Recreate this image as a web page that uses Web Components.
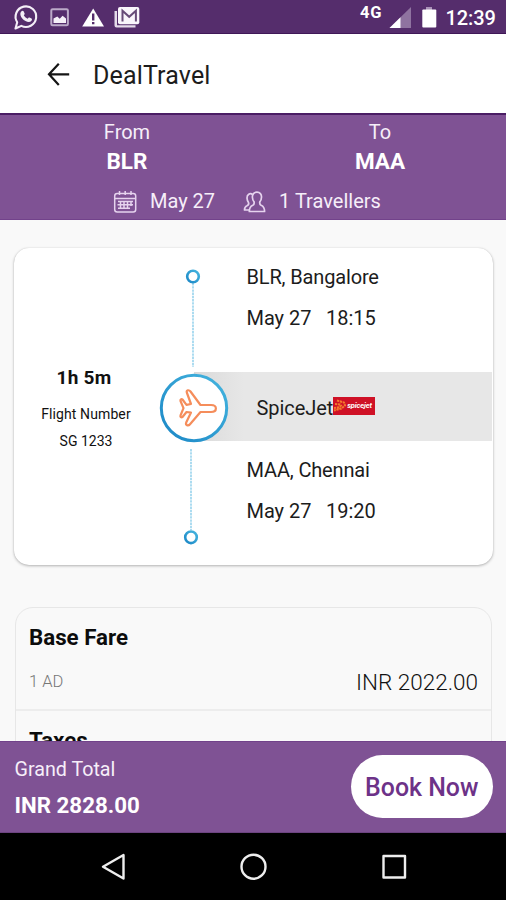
<!DOCTYPE html>
<html lang="en">
<head>
<meta charset="utf-8">
<title>DealTravel</title>
<style>
html,body{margin:0;height:100%;overflow:hidden;background:#f9f9f9}
body{font-family:Roboto,"Liberation Sans",sans-serif;color:#1c1c1c}
</style>
</head>
<body>
<deal-app></deal-app>
<script>
function define(name, html) {
  const t = document.createElement('template');
  t.innerHTML = html;
  customElements.define(name, class extends HTMLElement {
    constructor() {
      super();
      this.attachShadow({mode: 'open'}).appendChild(t.content.cloneNode(true));
    }
  });
}

define('status-bar', `
<style>
:host{display:flex;height:34px;background:#552d6c;color:#fff;box-sizing:border-box;box-shadow:inset 0 -1px #3f1757}
svg{display:block;flex:none}
.left{width:340px}
.net{font:700 16.500px/20px Roboto,sans-serif;padding:3px 0 0 20px;width:26px;letter-spacing:.8px}
.sig{width:50px;margin-left:1px}
.time{font:500 20px/36px Roboto,sans-serif;margin-left:8.500px;letter-spacing:-.1px}
</style>
<svg class="left" width="340" height="34" viewBox="0 0 340 34" fill="none">
  <path d="M15.5 28.5 17.2 22.2A10.3 10.3 0 1 1 21.3 25.9Z" stroke="#f4eef7" stroke-width="2.1" stroke-linejoin="round"/>
  <path d="M21.5 11.2c.7-.8 1.7-.7 2.1.1l1 2.1c.2.5 0 .9-.8 1.9.8 1.6 2 2.7 3.8 3.4 1-1.1 1.3-1.4 1.9-1.1l2 1c.7.4.6 1.4 0 2.1-1.4 1.6-3.6 1.6-6 .3-2.500-1.300-4.400-3.600-5-5.800-.4-1.600 0-3 1-4z" fill="#f4eef7"/>
  <rect x="51.300" y="9.300" width="16.600" height="16" rx="1.300" stroke="#bba9c8" stroke-width="2"/>
  <path d="M53.500 23v-4.500l3.800-2 2.400 2.200 2.900-3 3.400 2.800V23z" fill="#f5eff8"/>
  <path d="M93.200 8.400 104 26.500H82.200z" fill="#fff"/>
  <path d="M92 13.500h2.400v7H92zM92 22h2.400v2.300H92z" fill="#552d6c"/>
  <path d="M114.500 11h2.500v14.200h18.500v2.300h-19a2 2 0 0 1-2-2z" fill="#e5dbea"/>
  <rect x="118" y="7" width="21.300" height="17.300" rx="2" fill="#f9f5fb"/>
  <path d="M122.500 21.500V10.800l6.700 6 6.700-6V21.500" stroke="#674b78" stroke-width="2"/>
</svg>
<span class="net">4G</span>
<svg class="sig" width="50" height="34" viewBox="387 0 50 34">
  <path d="M389.500 28 411 7v21z" fill="#8f73a0"/><path d="M389.500 28 400.500 17.300V28z" fill="#fff"/>
  <path d="M426 7h6v3h-6z" fill="#a991b7"/><rect x="422.300" y="9.500" width="14" height="18" rx="1" fill="#fff"/>
</svg>
<span class="time">12:39</span>`);

define('app-bar', `
<style>
:host{display:flex;align-items:center;height:79px;background:#fff;box-sizing:border-box;padding-left:46px}
svg{display:block}
h1{font:400 25px/32px Roboto,sans-serif;letter-spacing:.15px;margin:4px 0 0 22px}
</style>
<svg width="25" height="26" viewBox="0 0 25 26" fill="none" stroke="#151515" stroke-width="2.200"><path d="M12.800 2.700 3 13.300 12.800 24M3 13.300h20.200"/></svg>
<h1><slot></slot></h1>`);

define('route-stop', `
<style>
:host{display:flex;flex-direction:column;align-items:center;width:120px;color:#fff}
.l{font-size:20px;line-height:28px;color:#f6eef9}
.c{font-size:22.500px;font-weight:700;line-height:30px}
</style>
<span class="l"><slot name="label"></slot></span><span class="c"><slot></slot></span>`);

define('search-summary', `
<style>
:host{display:block;height:107px;background:#7f5294;box-sizing:border-box;padding-top:5px;box-shadow:inset 0 2px 0 #4a1d64,inset 0 -1px #72428b;color:#f6eef9}
.stops{display:flex;justify-content:space-between;padding:0 66px 0 67px}
.meta{display:flex;align-items:center;padding:10px 0 0 112px;font-size:20px;line-height:31px}
.meta span{margin-left:12px;margin-right:27px}
.meta svg+span+svg+span{margin-left:11px}
svg{display:block}
</style>
<div class="stops"><route-stop><span slot="label">From</span>BLR</route-stop><route-stop><span slot="label">To</span>MAA</route-stop></div>
<div class="meta">
<svg width="26" height="24" viewBox="0 0 26 24" fill="none" stroke="#e6d3ee" stroke-width="1.500"><rect x="2.700" y="3.500" width="21" height="18.500" rx="2.500"/><path d="M3 8.500h20.500M7.500 1v4M13.200 1v4M19 1v4M6 11.500h15M5.500 14.800h15.500M6 18.200h12M8.500 11v8M12 11v8M15.500 11v8M19 11v5"/></svg>
<span>May 27</span>
<svg width="26" height="24" viewBox="0 0 26 24" fill="none" stroke="#e6d3ee" stroke-width="1.700" stroke-linejoin="round"><path d="M10.500 4.500C8 2.500 4.900 4.500 5 8c.1 2.500.8 3.500 1.500 4.500.6 1.500 0 2.500-1.500 3.200-2 .8-2.500 1.800-2.500 4.300h5"/><path d="M15 2.200c-3 0-4.800 2-4.600 5 .1 2.300.8 3.600 1.700 4.700.3 1.700.2 2.600-1.300 3.300-2.300 1-3.500 2-3.500 6.300h15.300c0-4.300-1.200-5.300-3.500-6.300-1.500-.7-1.600-1.600-1.300-3.300.9-1.100 1.600-2.400 1.700-4.700.2-3-1.600-5-4.500-5z"/></svg>
<span>1 Travellers</span>
</div>`);

define('airline-logo', `
<style>
:host{display:flex;align-items:center;width:42px;height:18px;background:#cf1126;color:#fff;box-sizing:border-box}
svg{display:block}
span{font:italic 700 7.500px/18px Roboto,sans-serif;letter-spacing:-.15px}
</style>
<svg width="14" height="18" viewBox="0 0 14 18" fill="none" stroke="#f47a2c" stroke-width="2" stroke-dasharray="2.300 .7"><path d="M4 3.500 11 5.500 12 8.500 8.500 11.500 1 13.500M2 7l5 .5 1 1.200-2 1.600-5 .7"/></svg>
<span>spicejet</span>`);

define('flight-end', `
<style>
:host{display:flex;flex-direction:column;font-size:20px;line-height:41px;white-space:pre}
slot[name=place]{display:block;letter-spacing:-.15px}
slot[name=when]{display:block;letter-spacing:-.04px}
</style><slot name="place"></slot><slot name="when"></slot>`);

define('flight-card', `
<style>
:host{display:grid;grid-template-columns:145px 70px 1fr;grid-template-rows:124px 69px 124px;margin:28px 13px 0 14px;height:317px;background:#fff;border-radius:15px;box-shadow:0 1px 3px rgba(0,0,0,.28),0 0 1px rgba(0,0,0,.15)}
.info{grid-area:1/1/4/2;display:flex;flex-direction:column;align-items:center;padding-top:117px;font-size:14px;line-height:27px;color:#111}
.info b{font-size:19px;letter-spacing:.3px;line-height:25px;margin:0 5px 11px 0}
.info .fn{letter-spacing:.1px;margin-right:1px}
.info .no{margin-right:1px}
.track{grid-area:1/2/4/3;display:block;z-index:1}
.band{grid-area:2/2/3/4;margin:0 1px 0 35px;background:linear-gradient(90deg,#dadada,#e7e7e7 50px);display:flex;align-items:center;padding-left:62.500px;font-size:20px}
airline-logo{margin:-1px 0 0 0}
.band span{padding-top:3px;letter-spacing:-.06px}
.a{grid-area:1/3;padding:9px 0 0 17.500px}
.b{grid-area:3/3;padding:9px 0 0 17.500px}
</style>
<div class="info"><b>1h 5m</b><span class="fn">Flight Number</span><span class="no">SG 1233</span></div>
<div class="band"><span>SpiceJet</span><airline-logo></airline-logo></div>
<svg class="track" width="70" height="317" viewBox="159 248 70 317" fill="none">
  <defs><linearGradient id="g" x1="0" y1="1" x2="1" y2="0"><stop offset="0" stop-color="#1b87c6"/><stop offset="1" stop-color="#45b5df"/></linearGradient></defs>
  <path d="M193 283v84M191 449v81" stroke="#80c9e8" stroke-width="1.300" stroke-dasharray="2.400 .8"/>
  <circle cx="193" cy="276.500" r="5.800" stroke="url(#g)" stroke-width="2.600" fill="#fff"/>
  <circle cx="191" cy="537.300" r="5.800" stroke="url(#g)" stroke-width="2.600" fill="#fff"/>
  <circle cx="194" cy="408" r="32.700" stroke="url(#g)" stroke-width="3" fill="#fff"/>
  <path d="M200.500 405 190.500 391.500C189 389.500 186 390 186.800 392.500L191 404 186.500 404.800 182.500 399.500C181.500 398.500 180 399.500 180.500 401L183.500 408.200 180.500 415.500C180 417 181.500 418 182.500 417L186.500 412 191 412.600 186.200 422.500C185.300 425 188 426.500 190 424.200L200.500 412H211C217.500 412 217.500 405 211 405Z" stroke="#f58d5b" stroke-width="2.200" stroke-linejoin="round"/>
</svg>
<flight-end class="a"><span slot="place">BLR, Bangalore</span><span slot="when">May 27   18:15</span></flight-end>
<flight-end class="b"><span slot="place">MAA, Chennai</span><span slot="when">May 27   19:20</span></flight-end>`);

define('fare-row', `
<style>
:host{display:block;height:103px;box-sizing:border-box;border-bottom:2px solid #ededed;padding:13px 13px 0}
h2{font:700 22.300px/32px Roboto,sans-serif;margin:0;color:#0c0c0c}
.r{display:flex;justify-content:space-between;align-items:center;line-height:30px;margin-top:14px;font-weight:300}
.q{font-size:16.500px;color:#777}
.p{font-size:22.500px;color:#111}
</style>
<h2><slot></slot></h2><div class="r"><span class="q"><slot name="qty"></slot></span><span class="p"><slot name="price"></slot></span></div>`);

define('fare-card', `
<style>:host{display:block;margin:42px 14px 0 15px;border:1px solid #e7e7e7;border-radius:18px;height:260px;background:#f9f9f9}</style><slot></slot>`);

define('booking-bar', `
<style>
:host{display:flex;justify-content:space-between;height:92px;background:#7f5294;color:#fff;box-sizing:border-box;padding:14px 13px 0 14.500px;box-shadow:inset 0 1px #71428a,inset 0 -1px #6c4480}
.t{display:flex;flex-direction:column}
.l{font-size:19.700px;line-height:29px;color:#f6eef9}
b{font-size:22.300px;line-height:42px}
button{all:unset;box-sizing:border-box;width:142.500px;height:63px;border-radius:32px;background:#fff;color:#6d3288;text-align:center;font:500 24.900px/66px Roboto,sans-serif}
</style>
<div class="t"><span class="l">Grand Total</span><b>INR 2828.00</b></div><button>Book Now</button>`);

define('system-nav', `
<style>:host{display:block;height:67px;background:#000}svg{display:block}</style>
<svg width="506" height="67" viewBox="0 833 506 67" fill="none" stroke="#eee" stroke-width="2.400" stroke-linejoin="round"><path d="M103 866.700 123.500 855v23.500z"/><circle cx="253.500" cy="866.700" r="12"/><rect x="383.500" y="856" width="21.500" height="21.500"/></svg>`);

define('deal-app', `
<style>
:host{display:flex;flex-direction:column;width:506px;height:900px;overflow:hidden}
main{flex:1;min-height:0;overflow:hidden;background:#f9f9f9}
status-bar,app-bar,search-summary,booking-bar,system-nav{flex:none}
</style>
<status-bar></status-bar>
<app-bar>DealTravel</app-bar>
<search-summary></search-summary>
<main>
<flight-card></flight-card>
<fare-card>
<fare-row>Base Fare<span slot="qty">1 AD</span><span slot="price">INR 2022.00</span></fare-row>
<fare-row>Taxes</fare-row>
</fare-card>
</main>
<booking-bar></booking-bar>
<system-nav></system-nav>`);
</script>
</body>
</html>
